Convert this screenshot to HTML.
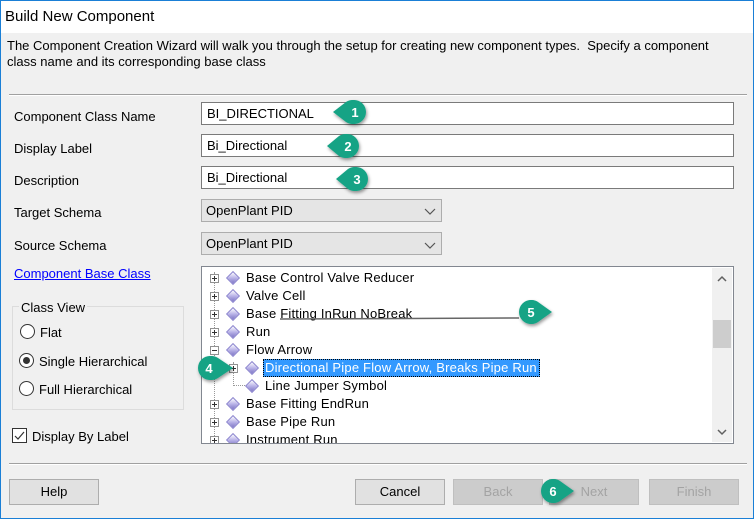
<!DOCTYPE html><html><head><style>
*{margin:0;padding:0;box-sizing:border-box}
body{width:754px;height:519px;background:#f0f0f0;font-family:"Liberation Sans",sans-serif;font-size:13px;color:#000;position:relative;overflow:hidden}
.a{position:absolute}
.win{left:0;top:0;width:754px;height:519px;border:1px solid #1a7fd6}
.inp{background:#fff;border:1px solid #7a7a7a;height:23px;padding-left:5px;line-height:21px}
.sel{background:#e5e5e5;border:1px solid #adadad;height:23px;padding-left:4px;line-height:21px;width:241px;left:201px}
.btn{border:1px solid #adadad;background:#e1e1e1;height:26px;width:90px;text-align:center;line-height:24px;top:479px}
.dis{color:#a3a3a3;background:#cccccc;border-color:#bfbfbf}
.tr{font-size:13px;line-height:18px;white-space:nowrap;letter-spacing:0.2px}
.pb{width:9px;height:9px;border:1px solid #919191;background:#fff}
.pb:before{content:"";position:absolute;left:1px;top:3px;width:5px;height:1px;background:#333}
.pb.p:after{content:"";position:absolute;left:3px;top:1px;width:1px;height:5px;background:#333}
.dm{width:10px;height:10px;transform:rotate(45deg);background:linear-gradient(135deg,#fff,#b9b3e8 50%,#7c74c4);border:1px solid #8d86cf}
</style></head><body>
<div class="a win"></div>
<div class="a" style="left:1px;top:1px;width:752px;height:32px;background:#fff"></div>
<div class="a" style="left:5px;top:8px;font-size:15px">Build New Component</div>
<div class="a" style="left:7px;top:38px;line-height:16px;width:718px">The Component Creation Wizard will walk you through the setup for creating new component types.&nbsp; Specify a component class name and its corresponding base class</div>
<div class="a" style="left:9px;top:94px;width:738px;height:2px;border-top:1px solid #a0a0a0;border-bottom:1px solid #fff"></div>
<div class="a" style="left:14px;top:109px">Component Class Name</div>
<div class="a" style="left:14px;top:141px">Display Label</div>
<div class="a" style="left:14px;top:173px">Description</div>
<div class="a" style="left:14px;top:205px">Target Schema</div>
<div class="a" style="left:14px;top:238px">Source Schema</div>
<div class="a inp" style="left:201px;top:102px;width:533px">BI_DIRECTIONAL</div>
<div class="a inp" style="left:201px;top:134px;width:533px">Bi_Directional</div>
<div class="a inp" style="left:201px;top:166px;width:533px">Bi_Directional</div>
<div class="a sel" style="top:199px">OpenPlant PID</div>
<div class="a sel" style="top:232px">OpenPlant PID</div>
<svg class="a" style="left:424px;top:206px" width="12" height="44"><path d="M1 3l5 5 5-5M1 37l5 5 5-5" fill="none" stroke="#555" stroke-width="1.2"/></svg>
<div class="a" style="left:14px;top:266px;color:#0000ff;text-decoration:underline">Component Base Class</div>
<div class="a" style="left:12px;top:306px;width:172px;height:104px;border:1px solid #dcdcdc"></div>
<div class="a" style="left:19px;top:300px;background:#f0f0f0;padding:0 2px">Class View</div>
<div class="a" style="left:20px;top:324px;width:15px;height:15px;border:1px solid #333;border-radius:50%;background:#fff"></div>
<div class="a" style="left:40px;top:325px">Flat</div>
<div class="a" style="left:19px;top:353px;width:15px;height:15px;border:1px solid #333;border-radius:50%;background:#fff"></div>
<div class="a" style="left:23px;top:357px;width:7px;height:7px;border-radius:50%;background:#333"></div>
<div class="a" style="left:39px;top:354px">Single Hierarchical</div>
<div class="a" style="left:19px;top:381px;width:15px;height:15px;border:1px solid #333;border-radius:50%;background:#fff"></div>
<div class="a" style="left:39px;top:382px">Full Hierarchical</div>
<div class="a" style="left:12px;top:428px;width:15px;height:15px;border:1px solid #333;background:#fff"></div>
<svg class="a" style="left:13px;top:429px" width="13" height="13"><path d="M2 7l3 3 6-7" fill="none" stroke="#333" stroke-width="1.2"/></svg>
<div class="a" style="left:32px;top:429px">Display By Label</div>
<div class="a" style="left:201px;top:266px;width:533px;height:178px;background:#fff;border:1px solid #828790;overflow:hidden">
<div class="a" style="left:510px;top:1px;width:20px;height:174px;background:#f0f0f0"></div>
<div class="a" style="left:511px;top:53px;width:18px;height:28px;background:#cdcdcd"></div>
<svg class="a" style="left:514px;top:7px" width="12" height="164"><path d="M2 7l4-4 4 4M2 156l4 4 4-4" fill="none" stroke="#606060" stroke-width="1.5"/></svg>
<div class="a" style="left:12px;top:5px;height:172px;border-left:1px dotted #999"></div>
<div class="a" style="left:31px;top:95px;height:24px;border-left:1px dotted #999"></div>
<div class="a" style="left:31px;top:118px;width:14px;border-top:1px dotted #999"></div>
<div class="a" style="left:61px;top:92px;width:277px;height:18px;background:#3399ff;border:1px dotted #000"></div>
<div class="a tr" style="left:44px;top:2px">Base Control Valve Reducer</div>
<div class="a tr" style="left:44px;top:20px">Valve Cell</div>
<div class="a tr" style="left:44px;top:38px">Base Fitting InRun NoBreak</div>
<div class="a tr" style="left:44px;top:56px">Run</div>
<div class="a tr" style="left:44px;top:74px">Flow Arrow</div>
<div class="a tr" style="left:63px;top:92px;color:#fff">Directional Pipe Flow Arrow, Breaks Pipe Run</div>
<div class="a tr" style="left:63px;top:110px">Line Jumper Symbol</div>
<div class="a tr" style="left:44px;top:128px">Base Fitting EndRun</div>
<div class="a tr" style="left:44px;top:146px">Base Pipe Run</div>
<div class="a tr" style="left:44px;top:164px">Instrument Run</div>
<div class="a pb p" style="left:8px;top:7px"></div><div class="a dm" style="left:26px;top:6px"></div>
<div class="a pb p" style="left:8px;top:25px"></div><div class="a dm" style="left:26px;top:24px"></div>
<div class="a pb p" style="left:8px;top:43px"></div><div class="a dm" style="left:26px;top:42px"></div>
<div class="a pb p" style="left:8px;top:61px"></div><div class="a dm" style="left:26px;top:60px"></div>
<div class="a pb" style="left:8px;top:79px"></div><div class="a dm" style="left:26px;top:78px"></div>
<div class="a pb p" style="left:27px;top:97px"></div><div class="a dm" style="left:45px;top:96px"></div>
<div class="a dm" style="left:45px;top:114px"></div>
<div class="a pb p" style="left:8px;top:133px"></div><div class="a dm" style="left:26px;top:132px"></div>
<div class="a pb p" style="left:8px;top:151px"></div><div class="a dm" style="left:26px;top:150px"></div>
<div class="a pb p" style="left:8px;top:169px"></div><div class="a dm" style="left:26px;top:168px"></div>
</div>
<div class="a" style="left:9px;top:463px;width:738px;height:2px;border-top:1px solid #a0a0a0;border-bottom:1px solid #fff"></div>
<div class="a btn" style="left:9px">Help</div>
<div class="a btn" style="left:355px">Cancel</div>
<div class="a btn dis" style="left:453px">Back</div>
<div class="a btn dis" style="left:549px">Next</div>
<div class="a btn dis" style="left:649px">Finish</div>
<svg class="a" style="left:0;top:0" width="754" height="519">
<defs><filter id="s"><feDropShadow dx="1" dy="2" stdDeviation="1.5" flood-opacity=".4"/></filter></defs>
<g fill="#17a385" filter="url(#s)">
<path d="M333 112L346 102A12 12 0 1 1 346 122Z"/><circle cx="354" cy="112" r="12"/>
<path d="M327 146L339 136A12 12 0 1 1 339 156Z"/><circle cx="347" cy="146" r="12"/>
<path d="M336 179L348 169A12 12 0 1 1 348 189Z"/><circle cx="356" cy="179" r="12"/>
<path d="M233 368L218 358A12 12 0 1 0 218 378Z"/><circle cx="210" cy="368" r="12"/>
<path d="M552 312L538 302A12 12 0 1 0 538 322Z"/><circle cx="531" cy="312" r="12"/>
<path d="M574 491L560 481A12 12 0 1 0 560 501Z"/><circle cx="553" cy="491" r="12"/>
</g>
<line x1="280" y1="319" x2="519" y2="318" stroke="#666" stroke-width="1.5"/>
<g fill="#fff" font-family="Liberation Sans" font-size="13" font-weight="bold" text-anchor="middle">
<text x="355" y="117">1</text><text x="348" y="151">2</text><text x="357" y="184">3</text>
<text x="209" y="373">4</text><text x="531" y="317">5</text><text x="553" y="496">6</text></g>
</svg>
</body></html>
